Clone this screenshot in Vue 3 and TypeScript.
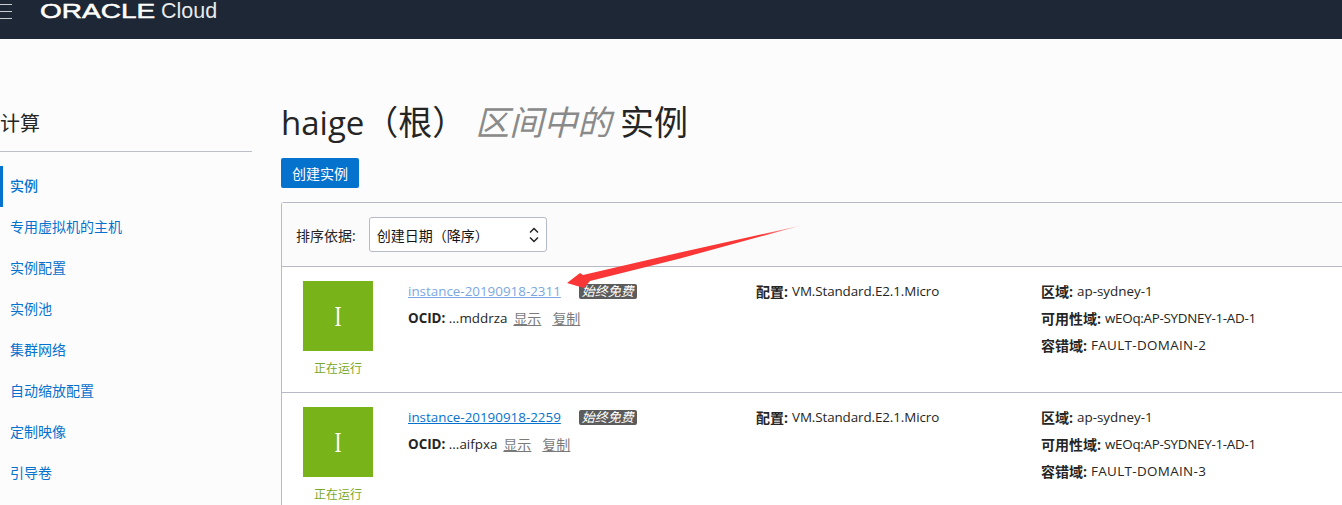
<script setup lang="ts">
interface Row { name: string; badgeTone: string; ocid: string; fault: string }
const nav: string[] = ['实例', '专用虚拟机的主机', '实例配置', '实例池', '集群网络', '自动缩放配置', '定制映像', '引导卷']
const rows: Row[] = [
  { name: 'instance-20190918-2311', badgeTone: 'visited', ocid: '...mddrza', fault: 'FAULT-DOMAIN-2' },
  { name: 'instance-20190918-2259', badgeTone: '', ocid: '...aifpxa', fault: 'FAULT-DOMAIN-3' },
]
</script>

<template>
  <div class="page">
    <header class="top">
      <div class="burger"><i></i><i></i><i></i></div>
      <div class="brand"><span class="oracle">ORACLE</span><span class="cloud">Cloud</span></div>
    </header>
    <div class="body">
      <aside class="side">
        <h2>计算</h2>
        <ul>
          <li v-for="(n, i) in nav" :key="n" :class="{ active: i === 0 }">{{ n }}</li>
        </ul>
      </aside>
      <main class="main">
        <h1><span class="latin">haige</span><span class="tc">（根）</span> <em>区间中的</em> 实例</h1>
        <button class="create">创建实例</button>
        <section class="panel">
          <div class="sort">
            <label>排序依据:</label>
            <div class="select">
              <span class="tc">创建日期（降序）</span>
              <svg width="10" height="18" viewBox="0 0 10 18" fill="none" stroke="#222" stroke-width="1.5"><path d="M1 6.5 5 2.5 9 6.5M1 11.5 5 15.5 9 11.5"/></svg>
            </div>
          </div>
          <article v-for="r in rows" :key="r.name" class="row">
            <div class="state">
              <div class="tile"><span>I</span></div>
              <div class="run">正在运行</div>
            </div>
            <div class="col-name">
              <div class="line">
                <a :class="['inst', r.badgeTone]">{{ r.name }}</a>
                <span class="badge">始终免费</span>
              </div>
              <div class="line">
                <b>OCID:</b>&nbsp;{{ r.ocid }}<a class="act first">显示</a><a class="act">复制</a>
              </div>
            </div>
            <div class="col-shape"><div class="line"><b>配置:</b> <span class="shape">VM.Standard.E2.1.Micro</span></div></div>
            <div class="col-region">
              <div class="line"><b>区域:</b> ap-sydney-1</div>
              <div class="line"><b>可用性域:</b> <span class="ad">wEOq:AP-SYDNEY-1-AD-1</span></div>
              <div class="line"><b>容错域:</b> <span class="fd">{{ r.fault }}</span></div>
            </div>
          </article>
        </section>
      </main>
    </div>
    <svg class="arrow" width="1342" height="505" viewBox="0 0 1342 505">
      <defs>
        <linearGradient id="fade" gradientUnits="userSpaceOnUse" x1="802" y1="226" x2="760" y2="236">
          <stop offset="0" stop-color="#fa3636" stop-opacity="0.25"/>
          <stop offset="1" stop-color="#fa3636"/>
        </linearGradient>
      </defs>
      <path fill="url(#fade)" d="M801 225.500 680 252.500 583 275 580 273 567 283 584 288 590 281 680 258.500Z"/>
    </svg>
  </div>
</template>

<style>
html, body { margin: 0; background: #fcfcfc; }
</style>

<style scoped>
.page { width: 1342px; height: 505px; overflow: hidden; position: relative; font-family: "Open Sans", "Noto Sans CJK SC", sans-serif; font-size: 13.4px; color: #252525; background: #fcfcfc; }
.top { height: 39px; background: #1d2735; position: relative; display: flex; align-items: flex-start; box-sizing: border-box; }
.burger { width: 12px; margin-top: 4px; display: flex; flex-direction: column; gap: 6px; }
.burger i { display: block; height: 1px; background: #c9ccd0; }
.brand { margin-left: 28px; display: flex; align-items: flex-start; color: #fff; }
.oracle { font-family: "Liberation Sans", sans-serif; font-weight: 400; -webkit-text-stroke: 0.5px #fff; font-size: 20px; line-height: 20px; width: 115px; margin-top: 1px; display: inline-block; transform: scaleX(1.4); transform-origin: left center; }
.cloud { font-family: "Liberation Sans", sans-serif; font-size: 21.5px; line-height: 22px; margin-left: 6px; color: #e8eaec; }
.body { display: flex; }
.side { width: 252px; flex: none; }
.side h2 { margin: 71px 0 0; font-size: 20px; font-weight: 400; line-height: 28px; padding-bottom: 13px; border-bottom: 1px solid #bcbec8; color: #252525; }
.side ul { list-style: none; margin: 14px 0 0; padding: 0; }
.side li { height: 41px; line-height: 39px; padding-left: 10px; color: #0572ce; font-size: 14px; }
.side li.active { box-shadow: inset 3px 0 0 #0572ce; font-weight: 500; }
.main { margin-left: 29px; flex: 1; min-width: 0; }
.main h1 { margin: 58px 0 0; height: 50px; font-size: 34px; font-weight: 400; line-height: 50px; color: #252525; white-space: pre; }
.main h1 .latin { font-size: 33px; }
.tc { font-family: "Open Sans", "Noto Sans CJK TC", sans-serif; }
.main h1 em { color: #8a8a8a; font-style: italic; }
.create { display: block; margin-top: 11px; width: 78px; height: 30px; padding: 0; border: 0; border-radius: 2px; background: #0572ce; color: #fff; font: inherit; font-size: 14px; }
.panel { margin-top: 14px; border: 1px solid #b6bac4; border-right: 0; border-bottom: 0; border-top-left-radius: 3px; background: #fff; }
.sort { height: 63px; display: flex; align-items: center; padding-left: 14px; background: #fbfbfb; border-bottom: 1px solid #b6bac4; font-size: 14px; }
.select { margin-left: 13px; width: 178px; height: 35px; box-sizing: border-box; border: 1px solid #b6bac4; border-radius: 3px; background: #fff; display: flex; align-items: center; justify-content: space-between; padding: 0 7px; color: #161513; }
.row { height: 125px; display: flex; border-bottom: 1px solid #b6bac4; }
.state { width: 70px; margin-left: 21px; padding-top: 14px; flex: none; text-align: center; }
.tile { width: 70px; height: 70px; background: #78b31a; color: #fff; font: 400 30px/70px "Liberation Serif", serif; }
.tile span { display: inline-block; transform: scaleX(.7); }
.run { margin-top: 9px; font-size: 12px; line-height: 17px; color: #78a82a; }
.col-name { width: 348px; margin-left: 35px; flex: none; padding-top: 11px; }
.col-shape { width: 285px; flex: none; padding-top: 11px; }
.col-region { padding-top: 11px; flex: none; }
.line { height: 27px; line-height: 27px; white-space: nowrap; display: flex; align-items: center; }
.line b { font-weight: 700; margin-right: 4px; font-size: 14px; }
.col-name .line b { margin-right: 0; font-size: 13.4px; }
.shape { letter-spacing: -0.1px; }
.ad { letter-spacing: -0.28px; }
.fd { letter-spacing: 0.35px; }
.inst { color: #0572ce; text-decoration: underline; }
.inst.visited { color: #7ba7e0; }
.badge { margin-left: 18px; height: 15px; line-height: 15px; width: 58px; text-align: center; background: #5c5c5c; color: #fff; border-radius: 2px; font-size: 13px; font-style: italic; }
.act { color: #7a7a7a; text-decoration: underline; margin-left: 11px; font-size: 14px; }
.act.first { margin-left: 6px; }
.arrow { position: absolute; left: 0; top: 0; pointer-events: none; }
</style>
